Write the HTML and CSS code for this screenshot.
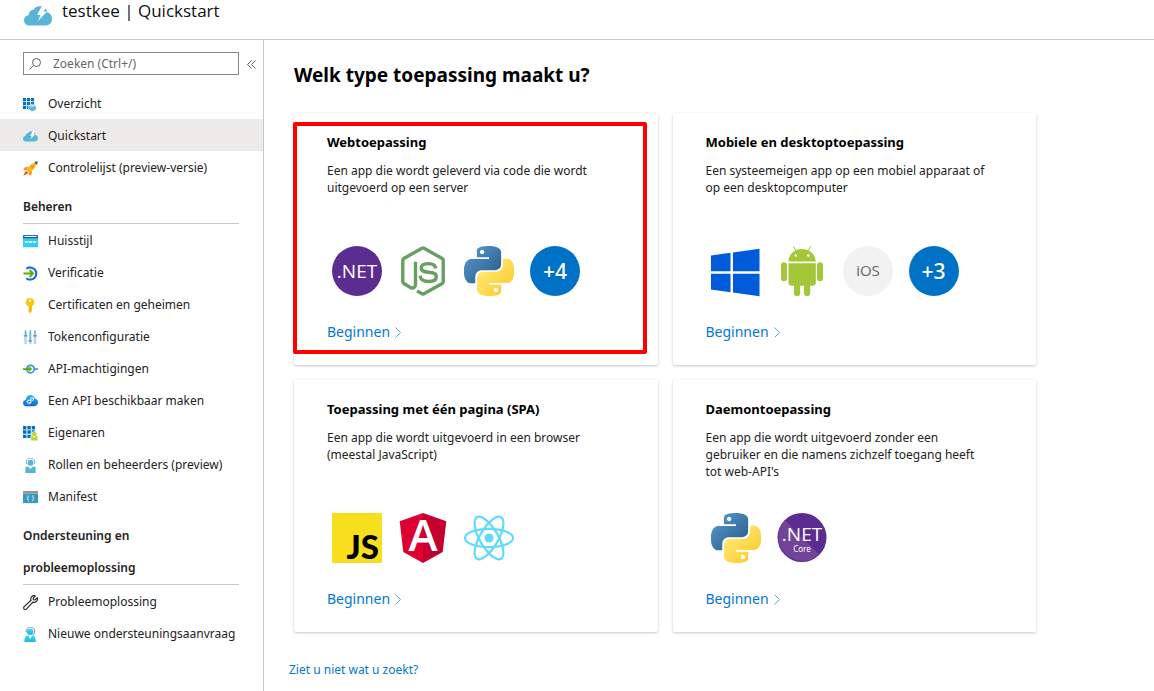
FILE: index.html
```html
<!DOCTYPE html>
<html lang="nl">
<head>
<meta charset="utf-8">
<title>testkee | Quickstart</title>
<link rel="stylesheet" href="styles.css">
</head>
<body>
<svg class="defs" aria-hidden="true">
  <defs>
    <linearGradient id="py-blue" x1="0" y1="0" x2="1" y2="1"><stop offset="0" stop-color="#5a9fd4"/><stop offset="1" stop-color="#245580"/></linearGradient>
    <linearGradient id="py-yellow" x1="0" y1="0" x2="1" y2="1"><stop offset="0.2" stop-color="#ffe873"/><stop offset="0.9" stop-color="#ffc92a"/></linearGradient>
    <linearGradient id="sky" x1="0" y1="0" x2="0" y2="1"><stop offset="0" stop-color="#35b9f0"/><stop offset="1" stop-color="#0f63cf"/></linearGradient>
    <linearGradient id="cyan" x1="0" y1="0" x2="0" y2="1"><stop offset="0" stop-color="#3fdcf8"/><stop offset="1" stop-color="#25b2de"/></linearGradient>
    <symbol id="cloud" viewBox="0 0 28 20">
      <path fill="#59b4d9" d="M6 19.500C2.400 19.500 0 17.200 0 14.200c0-2.800 1.900-4.800 4.700-5.300C4.900 5.800 7 3.700 9.800 3.400 11 1.400 13.200.2 15.600.2c3.900 0 7 2.600 7.600 6.400 2.900.5 4.800 3.100 4.800 6.200 0 3.700-2.600 6.700-6.200 6.700z"/>
      <path fill="#fff" d="M17.600.6l4.800 0-2.800 5 3.200.2-9 9.400 2.700-6.100-3.400-.3z"/>
    </symbol>
    <symbol id="grid9" viewBox="0 0 12 12">
      <path fill="#0072c6" d="M0 0h3.400v3.400H0zM4.300 0h3.400v3.400H4.300zM8.600 0H12v3.400H8.600zM0 4.300h3.400v3.400H0zM4.300 4.300h3.400v3.400H4.300zM8.600 4.300H12v3.400H8.600zM0 8.600h3.400V12H0zM4.300 8.600h3.400V12H4.300zM8.600 8.600H12V12H8.600z"/>
    </symbol>
    <symbol id="python" viewBox="0 0 24 24">
      <path fill="url(#py-blue)" d="M14.250.18l.9.2.73.26.59.3.45.32.34.34.25.34.16.33.1.3.04.26.02.2-.01.13V8.500l-.05.63-.13.55-.21.46-.26.38-.3.31-.33.25-.35.19-.35.14-.33.1-.3.07-.26.04-.21.02H8.770l-.69.05-.59.14-.5.22-.41.27-.33.32-.27.35-.2.36-.15.37-.1.35-.07.32-.04.27-.02.21v3.060H3.170l-.21-.03-.28-.07-.32-.12-.35-.18-.36-.26-.36-.36-.35-.46-.32-.59-.28-.73-.21-.88-.14-1.050-.05-1.230.06-1.220.16-1.040.24-.87.32-.71.36-.57.4-.44.42-.33.42-.24.4-.16.36-.1.32-.05.24-.01h.16l.06.01h8.160v-.83H6.180l-.01-2.750-.02-.37.05-.34.11-.31.17-.28.25-.26.31-.23.38-.2.44-.18.51-.15.58-.12.64-.1.71-.06.77-.04.84-.02 1.270.05zm-6.300 1.980l-.23.33-.08.41.08.41.23.34.33.22.41.09.41-.09.33-.22.23-.34.08-.41-.08-.41-.23-.33-.33-.22-.41-.09-.41.09z"/>
      <path fill="url(#py-yellow)" d="M21.100 6.110l.28.06.32.12.35.18.36.27.36.35.35.47.32.59.28.73.21.88.14 1.040.05 1.230-.06 1.230-.16 1.040-.24.86-.32.71-.36.57-.4.45-.42.33-.42.24-.4.16-.36.09-.32.05-.24.02-.16-.01h-8.220v.82h5.840l.01 2.760.02.36-.05.34-.11.31-.17.29-.25.25-.31.24-.38.2-.44.17-.51.15-.58.13-.64.09-.71.07-.77.04-.84.01-1.270-.04-1.070-.14-.9-.2-.73-.25-.59-.3-.45-.33-.34-.34-.25-.34-.16-.33-.1-.3-.04-.25-.02-.2.01-.13v-5.340l.05-.64.13-.54.21-.46.26-.38.3-.32.33-.24.35-.2.35-.14.33-.1.3-.06.26-.04.21-.02.13-.01h5.840l.69-.05.59-.14.5-.21.41-.28.33-.32.27-.35.2-.36.15-.36.1-.35.07-.32.04-.28.02-.21V6.070h2.090l.14.01zm-6.470 14.250l-.23.33-.08.41.08.41.23.33.33.23.41.08.41-.08.33-.23.23-.33.08-.41-.08-.41-.23-.33-.33-.23-.41-.08-.41.08z"/>
    </symbol>
    <symbol id="chevron" viewBox="0 0 6 11"><path fill="none" stroke="#5ba7dc" d="M.5.500l5 5-5 5"/></symbol>
  </defs>
</svg>

<header class="topbar">
  <svg class="topbar-icon" viewBox="0 0 28 20"><use href="#cloud"/></svg>
  <h1 class="topbar-title">testkee | Quickstart</h1>
</header>

<div class="layout">
  <nav class="sidebar" aria-label="Menu">
    <div class="search-row">
      <label class="search">
        <svg class="search-icon" viewBox="0 0 12 12"><path fill="none" stroke="#605e5c" d="M.5 11.500l4-4M11.500 4.500a4 4 0 1 1-8 0 4 4 0 0 1 8 0z"/></svg>
        <input class="search-input" type="search" placeholder="Zoeken (Ctrl+/)" aria-label="Zoeken">
      </label>
      <button class="collapse" type="button" aria-label="Menu samenvouwen">
        <svg class="collapse-icon" viewBox="0 0 9 9"><path fill="none" stroke="#605e5c" d="M4.500.5l-4 4 4 4M8.500.5l-4 4 4 4"/></svg>
      </button>
    </div>

    <ul class="menu">
      <li><a class="item" href="#"><svg class="icon" viewBox="0 0 16 16"><use href="#grid9" x="0" y="1" width="12" height="12"/><path fill="#59b4d9" stroke="#fff" stroke-width=".6" d="M10 7.600l4 1.800v4.200l-4 1.900-4-1.900V9.400z"/><path fill="#b5e0f2" d="M6.500 9.500L10 8l3.500 1.500L10 11z"/></svg>Overzicht</a></li>
      <li><a class="item item-active" href="#" aria-current="page"><svg class="icon" viewBox="0 0 16 16"><use href="#cloud" x="0" y="2" width="16" height="12"/></svg>Quickstart</a></li>
      <li><a class="item" href="#"><svg class="icon" viewBox="0 0 16 16"><path fill="#f78d1e" d="M5.500 6.200L1.700 7 .3 9.600l3.500.3zM9.800 10.500L9 14.300l-2.600 1.400-.3-3.500z"/><path fill="#fdb913" d="M14.600 1.300C9.800 1.600 6.400 4.800 3.800 9.900l2.500 2.500c5-2.600 8-6.100 8.300-11.100z"/><path fill="#e8542a" d="M3.400 10.400l2.300 2.300-1.600 1.200-3.600 1.700 1.500-3.500z"/><path fill="#1b5f8c" d="M15.800.2l-4 .8 3.200 3.200z"/><circle cx="10" cy="6" r="1.500" fill="#f78d1e"/></svg>Controlelijst (preview-versie)</a></li>
    </ul>

    <h2 class="group">Beheren</h2>
    <ul class="menu">
      <li><a class="item" href="#"><svg class="icon" viewBox="0 0 16 16"><path fill="#32cdf2" d="M0 4h16v9a1 1 0 0 1-1 1H1a1 1 0 0 1-1-1z"/><path fill="#1460a8" d="M1 1h14a1 1 0 0 1 1 1v2.500H0V2a1 1 0 0 1 1-1z"/><path fill="#fff" d="M1.500 2h13v1.200h-13z"/><path fill="none" stroke="#fff" stroke-width=".9" d="M2 7.500l.9 2 .8-2 .8 2 .9-2M6.300 7.500l.9 2 .8-2 .8 2 .9-2M10.600 7.500l.9 2 .8-2 .8 2 .9-2"/></svg>Huisstijl</a></li>
      <li><a class="item" href="#"><svg class="icon" viewBox="0 0 16 16"><path fill="none" stroke="#0f6fc5" stroke-width="2.200" d="M3.500 3A6.500 6.500 0 1 1 3.500 13"/><path fill="none" stroke="#5ea80c" stroke-width="2" d="M.5 8h9.800M7 4.300L10.700 8 7 11.700"/></svg>Verificatie</a></li>
      <li><a class="item" href="#"><svg class="icon" viewBox="0 0 16 16"><path fill="#ffc20e" fill-rule="evenodd" d="M7.500 0a4.600 4.600 0 0 1 2 8.700v5.300l-2 2-2-2v-1l1-1-1-1 .9-1-.9-1v-.3A4.600 4.600 0 0 1 7.500 0zm0 1.500a1.300 1.300 0 1 0 0 2.600 1.300 1.300 0 0 0 0-2.600z"/><path fill="#e8a200" d="M7.500 9h.8v5.500l-.8.800z"/></svg>Certificaten en geheimen</a></li>
      <li><a class="item" href="#"><svg class="icon" viewBox="0 0 16 16"><path fill="#a6d8eb" d="M1.500 1H4v14H1.500zM6.500 1H9v14H6.500zM11.500 1H14v14h-2.500z"/><path fill="#59b4d9" d="M2.200 0h1.200v5.500H2.200zM7.200 0h1.200v11H7.200zM12.200 0h1.200v5.500h-1.200z"/><path fill="#6f8791" d="M.8 5.500h4v1.500h-4zM5.800 10.800h4v1.500h-4zM10.800 5.500h4v1.500h-4z"/></svg>Tokenconfiguratie</a></li>
      <li><a class="item" href="#"><svg class="icon" viewBox="0 0 16 16"><circle cx="8" cy="7.500" r="4" fill="#fff" stroke="#3999c6" stroke-width="1.800"/><path stroke="#3999c6" stroke-width="1.800" d="M12 7.500h4"/><path fill="#5ea80c" d="M0 6.600h6V4.500l4 3-4 3V8.400H0z"/></svg>API-machtigingen</a></li>
      <li><a class="item" href="#"><svg class="icon" viewBox="0 0 16 16"><path fill="url(#sky)" d="M4 13C1.600 13 0 11.600 0 9.500c0-1.800 1.200-3.100 3-3.400C3.300 3 5.400 1 8 1c2.300 0 4.200 1.500 4.700 3.900C14.600 5.200 16 6.800 16 8.900 16 11.300 14.300 13 12 13z"/><circle cx="6.500" cy="8.300" r="1.800" fill="none" stroke="#fff" stroke-width="1.500" stroke-dasharray="1.200 .4"/><circle cx="9.700" cy="5.300" r="1.500" fill="none" stroke="#fff" stroke-width="1.300" stroke-dasharray="1.100 .4"/></svg>Een API beschikbaar maken</a></li>
      <li><a class="item" href="#"><svg class="icon" viewBox="0 0 16 16"><use href="#grid9" x="0" y="0" width="13" height="13"/><path fill="#b8d432" stroke="#fff" stroke-width=".6" d="M8.200 15.800V12c0-1 .6-1.500 1.500-1.500h.5a2.700 2.700 0 1 1 3.600 0h.5c.9 0 1.500.5 1.500 1.500v3.800z"/><path fill="#fff" d="M10.500 10.600h3L12 12.700z"/></svg>Eigenaren</a></li>
      <li><a class="item" href="#"><svg class="icon" viewBox="0 0 16 16"><circle cx="8" cy="5" r="3.200" fill="#59b4d9"/><path fill="none" stroke="#59b4d9" d="M3.700 6.500a4.700 4.700 0 1 1 8.600 0"/><path fill="#59b4d9" d="M3.500 9.300H6L8 12l2-2.700h2.500a1 1 0 0 1 1 1V16h-11v-5.700a1 1 0 0 1 1-1z"/></svg>Rollen en beheerders (preview)</a></li>
      <li><a class="item" href="#"><svg class="icon" viewBox="0 0 16 16"><path fill="#3999c6" d="M0 4h16v10H0z"/><path fill="#949494" d="M0 1h16v3H0z"/><path fill="none" stroke="#fff" stroke-width=".9" d="M6.300 6.300c-1 0-1 .3-1 1.200s0 1.200-.8 1.500c.8.3.8.600.8 1.500s0 1.200 1 1.200M9.700 6.300c1 0 1 .3 1 1.200s0 1.200.8 1.500c-.8.300-.8.600-.8 1.500s0 1.200-1 1.200"/></svg>Manifest</a></li>
    </ul>

    <h2 class="group">Ondersteuning en probleemoplossing</h2>
    <ul class="menu">
      <li><a class="item" href="#"><svg class="icon" viewBox="0 0 16 16"><path fill="none" stroke="#222" stroke-width="1.200" stroke-linejoin="round" d="M13.200.9L10.800 3.300l.3 1.700 1.700.3 2.400-2.500c.6 2-.1 3.600-1.300 4.400-1 .7-2.200.8-3.300.4l-6.800 7.300c-.8.800-1.900.8-2.600.1s-.7-1.800.1-2.600l7.200-6.800c-.5-1.500-.2-2.800.8-3.800 1-1 2.500-1.400 3.900-.9z"/></svg>Probleemoplossing</a></li>
      <li><a class="item" href="#"><svg class="icon" viewBox="0 0 16 16"><path fill="none" stroke="#8a8a8a" d="M3.500 5.500a4.600 4.600 0 1 1 9 0c0 1.500-.7 2.500-2 3"/><circle cx="7.700" cy="5" r="3.500" fill="url(#cyan)"/><path fill="url(#cyan)" d="M4.300 9H6l1.700 4L9.500 9h1.200c1.800 0 3 3 3 7H1.500c0-4 1-7 2.800-7z"/></svg>Nieuwe ondersteuningsaanvraag</a></li>
    </ul>
  </nav>

  <main class="content">
    <h2 class="heading">Welk type toepassing maakt u?</h2>
    <div class="cards">
      <section class="card card-marked">
        <h3 class="card-title">Webtoepassing</h3>
        <p class="card-text">Een app die wordt geleverd via code die wordt uitgevoerd op een server</p>
        <div class="logos">
          <svg class="logo" viewBox="0 0 50 50" role="img" aria-label=".NET"><circle cx="25" cy="25" r="25" fill="#5c2d91"/><text class="net" x="25" y="32">.NET</text></svg>
          <svg class="logo" viewBox="0 0 50 50" role="img" aria-label="Node.js"><path fill="none" stroke="#689f63" stroke-width="3.400" stroke-linejoin="round" d="M17.500 15.700v22.500c0 3.300-2.300 4.700-5 3.200l-6.700-3.900a2 2 0 0 1-1-1.700V14.200a2 2 0 0 1 1-1.700L24 2.200a2 2 0 0 1 2 0l18.200 10.300a2 2 0 0 1 1 1.700v21.600a2 2 0 0 1-1 1.700L26 47.800a2 2 0 0 1-2 0l-5-2.900"/><path fill="none" stroke="#689f63" stroke-width="3.400" d="M37.700 22.500c-.3-3.500-3-4.900-7.500-4.900-4.300 0-7 1.600-7 4.500 0 3.100 2.600 3.700 7.300 4.200 5.300.5 7.800 1.200 7.800 4.500 0 3.200-2.700 4.700-7.700 4.700-5.500 0-8.100-1.900-8.500-5.900"/></svg>
          <svg class="logo" viewBox="0 0 24 24" role="img" aria-label="Python"><use href="#python"/></svg>
          <span class="more">+4</span>
        </div>
        <a class="start" href="#">Beginnen <svg class="chevron" viewBox="0 0 6 11"><use href="#chevron"/></svg></a>
      </section>

      <section class="card">
        <h3 class="card-title">Mobiele en desktoptoepassing</h3>
        <p class="card-text">Een systeemeigen app op een mobiel apparaat of op een desktopcomputer</p>
        <div class="logos">
          <svg class="logo" viewBox="0 0 50 50" role="img" aria-label="Windows"><path fill="#005bda" d="M0 9.500l19.500-2.700v18.400H0zM22 6.400L48.500 2.800v22.400H22zM0 27.800h19.500v18.400L0 43.500zM22 27.800h26.500v22.400L22 46.500z"/></svg>
          <svg class="logo" viewBox="0 0 50 50" role="img" aria-label="Android"><path fill="#a4c639" d="M11.500 15.500C11.500 8.500 17.500 3 25 3s13.700 5.500 13.700 12.500zM11.500 17.200h27.300V36.500a3.300 3.300 0 0 1-3.300 3.300h-2.300v7.200a3 3 0 0 1-6.200 0v-7.200h-3.800v7.200a3 3 0 0 1-6.200 0v-7.200h-2.200a3.300 3.300 0 0 1-3.300-3.300zM4 19.200a3 3 0 0 1 6 0v13a3 3 0 0 1-6 0zM40 19.200a3 3 0 0 1 6 0v13a3 3 0 0 1-6 0z"/><path stroke="#a4c639" stroke-linecap="round" d="M16.500.6l2.500 4.500M33.500.6L31 5.100"/><circle cx="18.700" cy="9.500" r="1.200" fill="#fff"/><circle cx="31.300" cy="9.500" r="1.200" fill="#fff"/></svg>
          <svg class="logo" viewBox="0 0 50 50" role="img" aria-label="iOS"><circle cx="25" cy="25" r="25" fill="#f2f2f2"/><text class="ios" x="25" y="30">iOS</text></svg>
          <span class="more">+3</span>
        </div>
        <a class="start" href="#">Beginnen <svg class="chevron" viewBox="0 0 6 11"><use href="#chevron"/></svg></a>
      </section>

      <section class="card">
        <h3 class="card-title">Toepassing met één pagina (SPA)</h3>
        <p class="card-text">Een app die wordt uitgevoerd in een browser (meestal JavaScript)</p>
        <div class="logos">
          <svg class="logo" viewBox="0 0 50 50" role="img" aria-label="JavaScript"><path fill="#f7df1e" d="M0 0h50v50H0z"/><text class="js" x="47" y="46">JS</text></svg>
          <svg class="logo" viewBox="0 0 50 50" role="img" aria-label="Angular"><path fill="#dd0031" d="M25 0L1.700 8.300l3.600 30.800L25 50z"/><path fill="#c3002f" d="M25 0l23.300 8.300-3.600 30.800L25 50z"/><text class="ng" x="25" y="38">A</text></svg>
          <svg class="logo" viewBox="0 0 50 50" role="img" aria-label="React"><circle cx="25" cy="25" r="4.500" fill="#61dafb"/><g fill="none" stroke="#61dafb" stroke-width="2.200"><ellipse cx="25" cy="25" rx="24" ry="9.200"/><ellipse cx="25" cy="25" rx="24" ry="9.200" transform="rotate(60 25 25)"/><ellipse cx="25" cy="25" rx="24" ry="9.200" transform="rotate(120 25 25)"/></g></svg>
        </div>
        <a class="start" href="#">Beginnen <svg class="chevron" viewBox="0 0 6 11"><use href="#chevron"/></svg></a>
      </section>

      <section class="card">
        <h3 class="card-title">Daemontoepassing</h3>
        <p class="card-text">Een app die wordt uitgevoerd zonder een gebruiker en die namens zichzelf toegang heeft tot web-API's</p>
        <div class="logos">
          <svg class="logo" viewBox="0 0 24 24" role="img" aria-label="Python"><use href="#python"/></svg>
          <svg class="logo" viewBox="0 0 50 50" role="img" aria-label=".NET Core"><circle cx="25" cy="24.500" r="24.500" fill="#5c2d91"/><path fill="#714399" d="M7.700 7.200a24.500 24.500 0 0 0 34.600 34.600z"/><text class="net" x="25" y="28">.NET</text><text class="core" x="25" y="39">Core</text></svg>
        </div>
        <a class="start" href="#">Beginnen <svg class="chevron" viewBox="0 0 6 11"><use href="#chevron"/></svg></a>
      </section>
    </div>
    <a class="help" href="#">Ziet u niet wat u zoekt?</a>
  </main>
</div>
</body>
</html>
```

FILE: styles.css
```css
* { box-sizing: border-box; }

body {
  margin: 0;
  min-height: 100vh;
  display: flex;
  flex-direction: column;
  background: #fff;
  color: #222;
  font: 13px/17px "Noto Sans", "Open Sans", sans-serif;
}

h1, h2, h3, p, ul { margin: 0; padding: 0; }
ul { list-style: none; }
a { text-decoration: none; color: #0078d4; }

.defs { position: absolute; width: 0; height: 0; }

.topbar {
  display: flex;
  gap: 10px;
  height: 40px;
  padding-left: 24px;
  border-bottom: 1px solid #c8c8c8;
}
.topbar-icon { width: 28px; height: 20px; margin-top: 6px; }
.topbar-title {
  font-family: "Open Sans", "Noto Sans", sans-serif;
  font-size: 17px;
  line-height: 22px;
  font-weight: 500;
  color: #111;
}

.layout { flex: 1; display: flex; }

.sidebar {
  flex: none;
  width: 264px;
  padding-top: 12px;
  border-right: 1px solid #c8c8c8;
}
.search-row { display: flex; gap: 8px; padding-left: 23px; margin-bottom: 12px; }
.search {
  display: flex;
  align-items: center;
  gap: 12px;
  width: 216px;
  height: 23px;
  padding: 0 6px 0 5px;
  border: 1px solid #8a8886;
}
.search-icon { flex: none; width: 12px; height: 12px; }
.search-input {
  flex: 1;
  min-width: 0;
  padding: 0;
  border: 0;
  outline: 0;
  background: none;
  font: inherit;
  font-size: 12px;
}
.search-input::placeholder { color: #666; opacity: 1; }
.collapse { display: flex; align-items: center; padding: 2px 0 0; border: 0; background: none; }
.collapse-icon { width: 9px; height: 9px; }

.item {
  display: flex;
  align-items: center;
  gap: 10px;
  height: 32px;
  padding: 2px 0 0 23px;
  font-size: 12px;
  line-height: 18px;
  color: #222;
  white-space: nowrap;
}
.item-active { background: #edebe9; }
.icon { flex: none; width: 15px; height: 15px; }

.group {
  margin: 8px 24px 0 23px;
  padding-right: 60px;
  border-bottom: 1px solid #c8c8c8;
  font-size: 12px;
  line-height: 32px;
  font-weight: 600;
}

.content { flex: 1; min-width: 0; padding: 22px 24px 12px 30px; }
.heading { font-size: 19px; line-height: 26px; font-weight: 700; color: #000; }

.cards {
  display: grid;
  grid-template-columns: 1fr 1fr;
  gap: 15px;
  max-width: 742px;
  margin: 25px 0 29px;
}
.card {
  position: relative;
  display: flex;
  flex-direction: column;
  align-items: flex-start;
  min-height: 252px;
  padding: 20px 33px 21px;
  border-radius: 2px;
  box-shadow: 0 1px 3px rgba(0, 0, 0, .22);
}
.card-marked::after {
  content: "";
  position: absolute;
  inset: 9px 11px 11px -1px;
  border: 4px solid #fe0000;
  border-radius: 2px;
  pointer-events: none;
}
.card-title { font-size: 13px; line-height: 18px; font-weight: 700; color: #000; margin-bottom: 11px; }
.card-text { flex: 1; max-width: 284px; font-size: 12px; }
.logos { display: flex; gap: 16px; padding-left: 5px; margin-bottom: 24px; }
.logo { width: 50px; height: 50px; overflow: visible; }
.net { font-family: "Open Sans", sans-serif; font-size: 19px; fill: #fff; text-anchor: middle; }
.core { font-size: 8px; fill: #fff; text-anchor: middle; }
.ios { font-family: "Open Sans", sans-serif; font-size: 15px; fill: #666; text-anchor: middle; }
.js { font-family: Lato, sans-serif; font-size: 33px; font-weight: 900; text-anchor: end; }
.ng { font-family: "Open Sans", sans-serif; font-size: 44px; font-weight: 600; fill: #fff; text-anchor: middle; }
.more {
  width: 50px;
  height: 50px;
  border-radius: 50%;
  background: #0072c6;
  color: #fff;
  font-size: 21px;
  line-height: 50px;
  font-weight: 500;
  text-align: center;
}
.start { display: flex; align-items: center; gap: 5px; font-size: 14px; line-height: 24px; }
.chevron { width: 6px; height: 11px; }
.help { margin-left: -5px; font-size: 12px; }
```
